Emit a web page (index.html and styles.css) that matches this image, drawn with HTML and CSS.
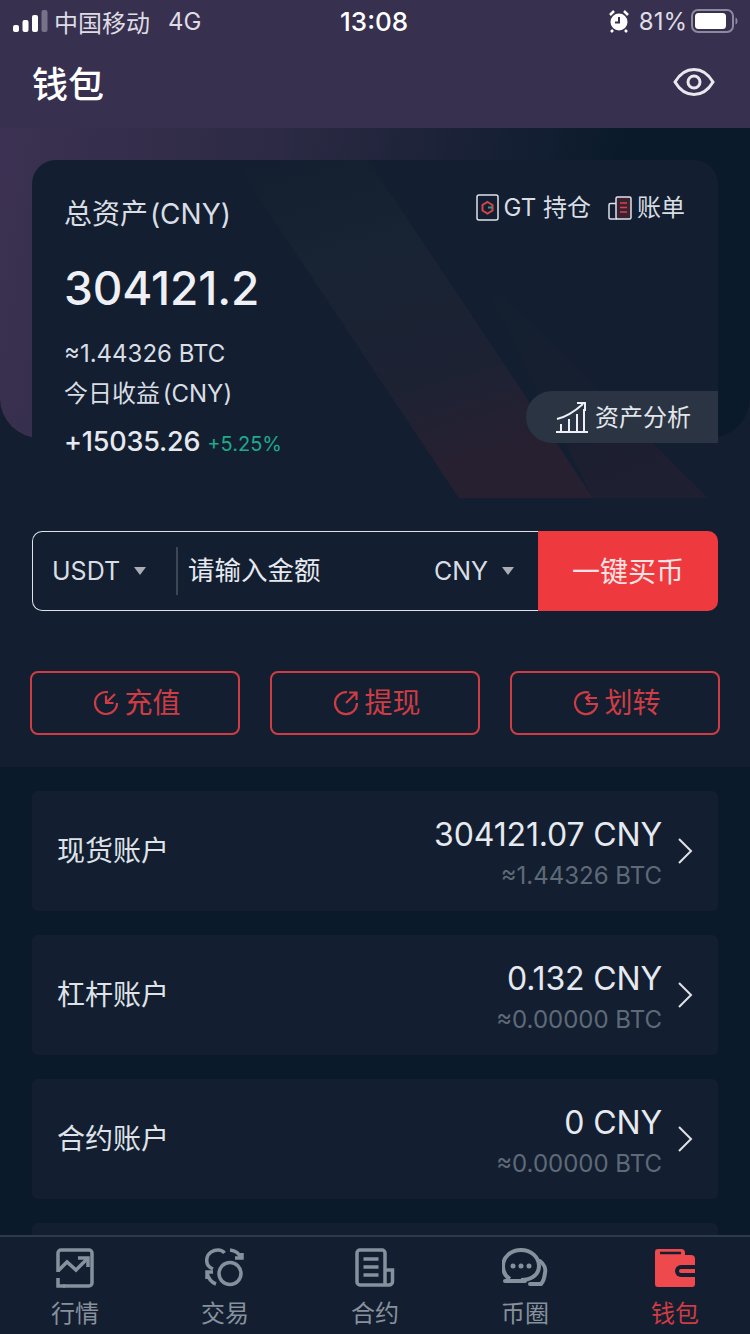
FILE: index.html
```html
<!DOCTYPE html>
<html lang="zh-CN">

<head>
    <meta charset="UTF-8">
    <meta name="viewport" content="width=device-width, initial-scale=1.0">
    <title>钱包</title>
    <link rel="stylesheet" href="styles.css">
</head>

<body>
    <div class="page">
        <main class="content">
            <header class="top">
                <div class="status">
                    <div class="status-left">
                        <svg class="signal" width="36" height="22" viewBox="0 0 36 22">
                            <rect x="0" y="15" width="6" height="7" rx="2" fill="#fff" />
                            <rect x="9.500" y="10" width="6" height="12" rx="2" fill="#fff" />
                            <rect x="19" y="5" width="6" height="17" rx="2" fill="#fff" />
                            <rect x="28.500" y="0" width="6" height="22" rx="2" fill="#77728a" />
                        </svg>
                        <span>中国移动</span>
                        <span class="net">4G</span>
                    </div>
                    <div class="status-time">13:08</div>
                    <div class="status-right">
                        <svg width="20" height="24" viewBox="0 0 20 24">
                            <circle cx="10" cy="13" r="8.500" fill="#fff" />
                            <path d="M10 8v5.500H6" fill="none" stroke="#37304e" stroke-width="2" />
                            <path d="M1 6l4-4M19 6l-4-4M4 21l-2 2M16 21l2 2" stroke="#fff" stroke-width="2.500" />
                        </svg>
                        <span class="battery-pct">81%</span>
                        <svg width="47" height="24" viewBox="0 0 47 24">
                            <rect x="1" y="1" width="41" height="22" rx="6" fill="none" stroke="#8d899e" stroke-width="2" />
                            <rect x="4" y="4" width="31" height="16" rx="3.500" fill="#fff" />
                            <path d="M44.500 8.500c1.500.5 2 2 2 3.500s-.5 3-2 3.500z" fill="#8d899e" />
                        </svg>
                    </div>
                </div>
                <div class="title-bar">
                    <h1 class="title">钱包</h1>
                    <svg width="42" height="36" viewBox="0 0 42 36" fill="none" stroke="#e9e8ee" stroke-width="3">
                        <path d="M2 18C7 9.500 14 5.500 21 5.500S35 9.500 40 18c-5 8.500-12 12.500-19 12.500S7 26.500 2 18z" />
                        <circle cx="21" cy="18" r="6" />
                    </svg>
                </div>
            </header>

            <section class="summary">
                <div class="hero">
                    <div class="card">
                        <svg class="card-bg" width="686" height="338" viewBox="0 0 686 338">
                            <defs>
                                <linearGradient id="stripe" x1="0" y1="0" x2="0.300" y2="1">
                                    <stop offset="0" stop-color="#172231" stop-opacity="0" />
                                    <stop offset="0.350" stop-color="#182333" />
                                    <stop offset="0.750" stop-color="#1d2233" />
                                    <stop offset="1" stop-color="#272031" />
                                </linearGradient>
                                <linearGradient id="stripe2" x1="0" y1="0" x2="0.400" y2="1">
                                    <stop offset="0" stop-color="#151f2f" stop-opacity="0" />
                                    <stop offset="0.600" stop-color="#161f2f" />
                                    <stop offset="1" stop-color="#1e1f30" />
                                </linearGradient>
                            </defs>
                            <path d="M446 110L676 338H561z" fill="url(#stripe2)" />
                            <path d="M202 0h134l225 338H427z" fill="url(#stripe)" />
                        </svg>
                        <div class="card-head">
                            <div class="total-label">总资产 (CNY)</div>
                            <div class="card-links">
                                <span class="card-link">
                                    <svg width="23" height="27" viewBox="0 0 23 27">
                                        <rect x="1" y="1" width="21" height="25" rx="2" fill="none" stroke="#dfe3ea" stroke-width="1.500" />
                                        <path d="M11.500 8l5 3v5.500l-5 3-5-3V11z" fill="none" stroke="#d8424f" stroke-width="2" />
                                        <path d="M12 13.500h4" stroke="#27a26f" stroke-width="2" />
                                    </svg>
                                    GT 持仓
                                </span>
                                <span class="card-link">
                                    <svg width="24" height="24" viewBox="0 0 24 24">
                                        <rect x="8" y="1" width="15" height="22" rx="1.500" fill="#3a2231" stroke="#dfe3ea" stroke-width="1.500" />
                                        <path d="M8 7.500H2.500a1.500 1.500 0 0 0-1.500 1.500v12.500a1.500 1.500 0 0 0 1.500 1.500H9" fill="none" stroke="#dfe3ea" stroke-width="1.500" />
                                        <path d="M12 7h7M12 11.500h7M12 16h7" stroke="#d8424f" stroke-width="1.500" />
                                    </svg>
                                    账单
                                </span>
                            </div>
                        </div>
                        <div class="total">304121.2</div>
                        <div class="btc">≈1.44326 BTC</div>
                        <div class="today-label">今日收益 (CNY)</div>
                        <div class="today">
                            <span class="today-num">+15035.26</span>
                            <span class="today-rate">+5.25%</span>
                        </div>
                        <div class="analysis">
                            <svg width="32" height="32" viewBox="0 0 32 32" fill="none" stroke="#eef0f4" stroke-width="2">
                                <path d="M1 18C10 16 18 11 27 3" />
                                <path d="M21 2h8v8" />
                                <path d="M0 31h32" />
                                <path d="M5 30v-7M13 30V18M21 30V13M28 30V8" />
                            </svg>
                            <span class="analysis-text">资产分析</span>
                        </div>
                    </div>
                </div>

                <div class="buy">
                    <div class="buy-fields">
                        <div class="coin">USDT<i class="caret"></i></div>
                        <div class="amount">请输入金额</div>
                        <div class="coin cny">CNY<i class="caret"></i></div>
                    </div>
                    <button class="buy-btn">一键买币</button>
                </div>

                <div class="actions">
                    <button class="action">
                        <svg width="26" height="26" viewBox="0 0 26 26" fill="none" stroke="#cf3c43" stroke-width="2.200">
                            <path d="M15 2.200A11 11 0 1 0 24 13" />
                            <path d="M22 4l-8.500 8.500M13 5.500v7.500h7.500" />
                        </svg>
                        <span>充值</span>
                    </button>
                    <button class="action">
                        <svg width="26" height="26" viewBox="0 0 26 26" fill="none" stroke="#cf3c43" stroke-width="2.200">
                            <path d="M14 2.200A11 11 0 1 0 24 13" />
                            <path d="M13 13l10-10M16 2.500h7.500V10" />
                        </svg>
                        <span>提现</span>
                    </button>
                    <button class="action">
                        <svg width="26" height="26" viewBox="0 0 26 26" fill="none" stroke="#cf3c43" stroke-width="2.200">
                            <path d="M16 2.500A11 11 0 1 0 24 13" />
                            <path d="M24 8H13M17 4l-4 4 4 4M13 14h11" />
                        </svg>
                        <span>划转</span>
                    </button>
                </div>
            </section>

            <section class="accounts">
                <div class="account">
                    <div class="account-name">现货账户</div>
                    <div class="account-vals">
                        <div class="account-cny">304121.07 CNY</div>
                        <div class="account-btc">≈1.44326 BTC</div>
                    </div>
                    <svg class="chevron" width="16" height="26" viewBox="0 0 16 26" fill="none" stroke="#dfe2e8" stroke-width="2">
                        <path d="M2 1l12 12L2 25" />
                    </svg>
                </div>
                <div class="account">
                    <div class="account-name">杠杆账户</div>
                    <div class="account-vals">
                        <div class="account-cny">0.132 CNY</div>
                        <div class="account-btc">≈0.00000 BTC</div>
                    </div>
                    <svg class="chevron" width="16" height="26" viewBox="0 0 16 26" fill="none" stroke="#dfe2e8" stroke-width="2">
                        <path d="M2 1l12 12L2 25" />
                    </svg>
                </div>
                <div class="account">
                    <div class="account-name">合约账户</div>
                    <div class="account-vals">
                        <div class="account-cny">0 CNY</div>
                        <div class="account-btc">≈0.00000 BTC</div>
                    </div>
                    <svg class="chevron" width="16" height="26" viewBox="0 0 16 26" fill="none" stroke="#dfe2e8" stroke-width="2">
                        <path d="M2 1l12 12L2 25" />
                    </svg>
                </div>
                <div class="account"></div>
            </section>
        </main>

        <nav class="tabs">
            <div class="tab">
                <svg width="40" height="40" viewBox="0 0 40 40" fill="none" stroke="#87919d" stroke-width="3.500">
                    <path d="M3 24V5a3 3 0 0 1 3-3h28a3 3 0 0 1 3 3v30a3 3 0 0 1-3 3H8" />
                    <path d="M3 23l9-9 9 8 11-11" />
                    <path d="M23 10h10v9" />
                    <path d="M3 30v8h7" />
                </svg>
                <span>行情</span>
            </div>
            <div class="tab">
                <svg width="40" height="40" viewBox="0 0 40 40" fill="none" stroke="#87919d" stroke-width="3.500">
                    <circle cx="25" cy="25.500" r="11" />
                    <path d="M8 21C3 19 1 15 2 10 3 5 8 2 13 2c3 0 5 1 6.500 3" />
                    <path d="M25 2c5 .5 9 3 11 8M30 10h7V5" />
                    <path d="M2 25c1 4 3.500 9 9 11M2 31v-7h6" />
                </svg>
                <span>交易</span>
            </div>
            <div class="tab">
                <svg width="40" height="40" viewBox="0 0 40 40" fill="none" stroke="#87919d" stroke-width="3.500">
                    <path d="M30 37H5a3 3 0 0 1-3-3V5a3 3 0 0 1 3-3h22a3 3 0 0 1 3 3v32h4a3.500 3.500 0 0 0 3.500-3.500V22H30" />
                    <path d="M8.500 11h15M8.500 19h15M8.500 27h15" />
                </svg>
                <span>合约</span>
            </div>
            <div class="tab">
                <svg width="46" height="40" viewBox="0 0 46 40" fill="none" stroke="#87919d" stroke-width="4">
                    <path d="M8 31C3 28 1 23 1 18 1 9 9 2 19 2s18 7 18 16-8 14-18 14" />
                    <path d="M3 33h20" stroke-linecap="round" />
                    <path d="M38 13c4 3 6 8 5 12-.5 4-2 9-4 11H28" stroke-linecap="round" />
                    <circle cx="11" cy="18" r="2.500" fill="#87919d" stroke="none" />
                    <circle cx="19" cy="18" r="2.500" fill="#87919d" stroke="none" />
                    <circle cx="27" cy="18" r="2.500" fill="#87919d" stroke="none" />
                </svg>
                <span>币圈</span>
            </div>
            <div class="tab active">
                <svg width="40" height="40" viewBox="0 0 40 40">
                    <path d="M3 1h23a4 4 0 0 1 4 4v2h6a4 4 0 0 1 4 4v25a3 3 0 0 1-3 3H3a3 3 0 0 1-3-3V4a3 3 0 0 1 3-3z" fill="#ee4a4d" />
                    <path d="M5 5h21" stroke="#131f30" stroke-width="2.500" />
                    <path d="M40 17H26a6 6 0 0 0 0 12h14z" fill="#131f30" />
                    <path d="M40 21H26a2 2 0 0 0 0 4h14z" fill="#ee4a4d" />
                </svg>
                <span>钱包</span>
            </div>
        </nav>
    </div>
</body>

</html>
```

FILE: styles.css
```css
* {
    box-sizing: border-box;
}

body {
    margin: 0;
    background-color: #0a1a2a;
    font-family: Inter, "Noto Sans CJK SC", sans-serif;
    color: #e6e9ef;
}

.page {
    width: 750px;
    height: 1334px;
    display: flex;
    flex-direction: column;
    overflow: hidden;
}

.content {
    flex: 1;
    min-height: 0;
    overflow: hidden;
}

/* purple header */
.top {
    height: 128px;
    background-color: #37304e;
    color: #fff;
}

.status {
    height: 42px;
    padding: 0 12px 0 13px;
    display: flex;
    align-items: center;
    justify-content: space-between;
    font-size: 24px;
}

.status-left {
    display: flex;
    align-items: center;
    gap: 5px;
    color: #dedce4;
}

.net {
    margin-left: 13px;
}

.status-time {
    font-size: 26px;
    font-weight: 500;
    margin-right: 62px;
}

.status-right {
    display: flex;
    align-items: center;
    gap: 7px;
    color: #dedce4;
}

.battery-pct {
    margin: 0 -3px 0 3px;
}

.title-bar {
    height: 86px;
    padding: 0 35px 6px 32px;
    display: flex;
    align-items: center;
    justify-content: space-between;
}

.title {
    margin: 0;
    font-size: 36px;
    font-weight: 500;
}

.summary {
    background-color: #131f30;
    height: 639px;
}

.hero {
    height: 310px;
    padding: 32px 32px 0;
    background: linear-gradient(100deg, #3c3152 0%, #2c2a44 35%, #0a1a2b 78%, #0a1a2b 100%);
    border-radius: 0 0 40px 40px;
}

.card {
    position: relative;
    height: 338px;
    padding: 36px 33px 0 32px;
    background-color: #131f30;
    border-radius: 24px 24px 0 0;
    overflow: hidden;
}

.card-bg {
    position: absolute;
    left: 0;
    top: 0;
}

.card-head,
.total,
.btc,
.today-label,
.today {
    position: relative;
}

.card-head {
    display: flex;
    justify-content: space-between;
    align-items: flex-start;
}

.total-label {
    font-size: 28px;
    line-height: 36px;
    word-spacing: -6px;
    color: #d9dde4;
}

.card-links {
    display: flex;
    gap: 17px;
    margin-top: -2px;
    font-size: 24px;
    line-height: 27px;
    color: #d9dde4;
}

.card-link {
    display: flex;
    align-items: center;
    gap: 5px;
}

.total {
    margin-top: 28px;
    font-size: 46px;
    line-height: 56px;
    font-weight: 500;
    letter-spacing: -0.150px;
    color: #eef0f5;
}

.btc {
    margin-top: 20px;
    font-size: 24px;
    line-height: 36px;
    color: #d9dde4;
}

.today-label {
    margin-top: 4px;
    font-size: 24px;
    line-height: 36px;
    word-spacing: -4px;
    color: #d9dde4;
}

.today {
    margin-top: 10px;
    display: flex;
    align-items: baseline;
    gap: 7px;
}

.today-num {
    font-size: 27px;
    line-height: 40px;
    font-weight: 500;
    letter-spacing: -0.200px;
}

.today-rate {
    font-size: 20px;
    color: #1fa98b;
}

/* sits over the card's right edge */
.analysis {
    position: absolute;
    right: 0;
    top: 231px;
    width: 192px;
    height: 52px;
    padding-left: 30px;
    display: flex;
    align-items: center;
    gap: 7px;
    background-color: #2a3442;
    border-radius: 26px 0 0 26px;
    font-size: 24px;
    color: #e2e5ea;
}

.analysis-text {
    margin-top: -4px;
}

.buy {
    margin: 93px 32px 0;
    height: 80px;
    display: flex;
}

.buy-fields {
    flex: 1;
    display: flex;
    align-items: center;
    padding-left: 19px;
    border: 1px solid #dfe3e8;
    border-right: 0;
    border-radius: 10px 0 0 10px;
    font-size: 25px;
    color: #d9dde4;
}

.coin {
    display: flex;
    align-items: center;
    gap: 14px;
}

.cny {
    margin-right: 24px;
}

.caret {
    width: 0;
    height: 0;
    border-left: 6.500px solid transparent;
    border-right: 6.500px solid transparent;
    border-top: 8px solid #a9adb3;
}

.amount {
    flex: 1;
    margin-left: 30px;
    padding-left: 10px;
    height: 48px;
    line-height: 46px;
    border-left: 2px solid #3c4756;
    font-size: 26.500px;
    color: #e6e9ef;
}

.buy-btn {
    width: 180px;
    border: 0;
    border-radius: 0 10px 10px 0;
    background-color: #ee3a3f;
    color: #fbe3e3;
    font-family: inherit;
    font-size: 28px;
    padding-bottom: 3px;
}

.actions {
    margin-top: 60px;
    padding: 0 30px;
    display: flex;
    gap: 30px;
}

.action {
    width: 210px;
    height: 64px;
    display: flex;
    align-items: center;
    justify-content: center;
    gap: 5px;
    padding: 0 0 0 4px;
    background: none;
    border: 2px solid #cf3c43;
    border-radius: 8px;
    color: #cf3c43;
    font-family: inherit;
    font-size: 28px;
}

.action span {
    margin-top: -4px;
}

.accounts {
    padding: 24px 32px 0;
    display: flex;
    flex-direction: column;
    gap: 24px;
}

.account {
    height: 120px;
    flex-shrink: 0;
    padding: 0 25px 0 25px;
    display: flex;
    align-items: center;
    background-color: #131f30;
    border-radius: 6px;
}

.account-name {
    flex: 1;
    margin-top: -4px;
    font-size: 28px;
    color: #dfe2e8;
}

.account-vals {
    text-align: right;
    margin-right: 15px;
}

.account-cny {
    margin-top: 5px;
    font-size: 32px;
    line-height: 40px;
    font-weight: 400;
    letter-spacing: -0.150px;
    color: #e6e9ef;
}

.account-btc {
    margin-top: 5px;
    font-size: 24px;
    line-height: 32px;
    color: #5f6a78;
}

.chevron {
    flex-shrink: 0;
}

.tabs {
    height: 99px;
    flex-shrink: 0;
    display: grid;
    grid-template-columns: repeat(5, 150px);
    background-color: #131f30;
    border-top: 2px solid #2c3a4d;
}

.tab {
    padding-top: 11px;
    display: flex;
    flex-direction: column;
    align-items: center;
    font-size: 24px;
    line-height: 34px;
    color: #87919d;
    gap: 9px;
}

.tab.active {
    color: #cf3c43;
}
```
